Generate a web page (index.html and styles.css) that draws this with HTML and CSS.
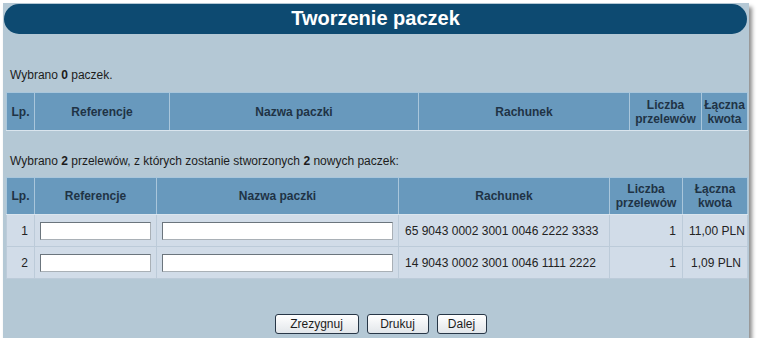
FILE: index.html
```html
<!DOCTYPE html>
<html lang="pl">
<head>
    <meta charset="UTF-8">
    <title>Tworzenie paczek</title>
    <link rel="stylesheet" href="styles.css">
</head>
<body>
    <div class="panel">
        <div class="title">Tworzenie paczek</div>

        <p class="info info-first">Wybrano <b>0</b> paczek.</p>
        <table class="grid grid-empty">
            <colgroup>
                <col style="width:28px">
                <col style="width:135px">
                <col style="width:249px">
                <col style="width:211px">
                <col style="width:72px">
                <col>
            </colgroup>
            <thead>
                <tr>
                    <th>Lp.</th>
                    <th>Referencje</th>
                    <th>Nazwa paczki</th>
                    <th>Rachunek</th>
                    <th>Liczba przelewów</th>
                    <th>Łączna kwota</th>
                </tr>
            </thead>
        </table>

        <p class="info info-second">Wybrano <b>2</b> przelewów, z których zostanie stworzonych <b>2</b> nowych paczek:</p>
        <table class="grid">
            <colgroup>
                <col style="width:28px">
                <col style="width:122px">
                <col style="width:242px">
                <col style="width:211px">
                <col style="width:73px">
                <col>
            </colgroup>
            <thead>
                <tr>
                    <th>Lp.</th>
                    <th>Referencje</th>
                    <th>Nazwa paczki</th>
                    <th>Rachunek</th>
                    <th>Liczba przelewów</th>
                    <th>Łączna kwota</th>
                </tr>
            </thead>
            <tbody>
                <tr>
                    <td class="num">1</td>
                    <td class="field"><input type="text"></td>
                    <td class="field"><input type="text"></td>
                    <td>65 9043 0002 3001 0046 2222 3333</td>
                    <td class="num">1</td>
                    <td class="num">11,00 PLN</td>
                </tr>
                <tr>
                    <td class="num">2</td>
                    <td class="field"><input type="text"></td>
                    <td class="field"><input type="text"></td>
                    <td>14 9043 0002 3001 0046 1111 2222</td>
                    <td class="num">1</td>
                    <td class="num">1,09 PLN</td>
                </tr>
            </tbody>
        </table>

        <div class="actions">
            <button class="btn btn-cancel">Zrezygnuj</button>
            <button class="btn btn-print">Drukuj</button>
            <button class="btn btn-next">Dalej</button>
        </div>
    </div>
</body>
</html>
```

FILE: styles.css
```css
body {
    margin: 0;
    padding: 0;
    background-color: #fff;
    font-family: "Liberation Sans", Arial, sans-serif;
    font-size: 12px;
    color: #1c1c1c;
}
.panel {
    width: 744px;
    height: 333px;
    margin: 3px 0 0 3px;
    padding: 1px;
    background-color: #b4c8d5;
    box-shadow: 3px 4px 4px rgba(0,0,0,0.45);
}
.title {
    height: 30px;
    line-height: 29px;
    margin-right: 1px;
    border-radius: 15px;
    background-color: #0d4a71;
    color: #fff;
    font-size: 20px;
    font-weight: bold;
    text-align: center;
}
.info {
    margin: 0 0 0 6px;
    line-height: 14px;
}
.info-first {
    margin-top: 34px;
    margin-bottom: 10px;
}
.info-second {
    margin-top: 23px;
    margin-bottom: 9px;
}
.info b {
    font-weight: bold;
}
.grid {
    width: 742px;
    margin-left: 2px;
    border-collapse: collapse;
    table-layout: fixed;
}
.grid th {
    height: 36px;
    padding: 0 2px;
    border: 1px solid #a9c6db;
    border-bottom-color: #dae5ee;
    background-color: #6899bd;
    color: #1f3345;
    font-size: 12px;
    font-weight: bold;
    line-height: 14px;
    text-align: center;
}
.grid-empty th {
    height: 37px;
}
.grid td {
    height: 31px;
    padding: 0 6px;
    border: 1px solid #bccbd9;
    background-color: #d1dce8;
    color: #222;
    white-space: nowrap;
}
.grid td.num {
    text-align: right;
}
.grid td.field {
    padding: 0 5px;
}
.grid input {
    display: block;
    width: 100%;
    height: 18px;
    box-sizing: border-box;
    margin: 0;
    border: 1px solid #a9b0b6;
    border-top-color: #6b757d;
    border-left-color: #6b757d;
    background-color: #fff;
}
.actions {
    display: flex;
    justify-content: center;
    gap: 8px;
    margin-top: 35px;
    padding-left: 9px;
}
.btn {
    height: 20px;
    padding: 0;
    border: 1px solid #273646;
    border-radius: 3px;
    background: linear-gradient(#ffffff, #e2e6ea);
    font-family: "Liberation Sans", Arial, sans-serif;
    font-size: 12px;
    color: #1c1c1c;
}
.btn-cancel {
    width: 84px;
}
.btn-print {
    width: 62px;
}
.btn-next {
    width: 50px;
}
```
